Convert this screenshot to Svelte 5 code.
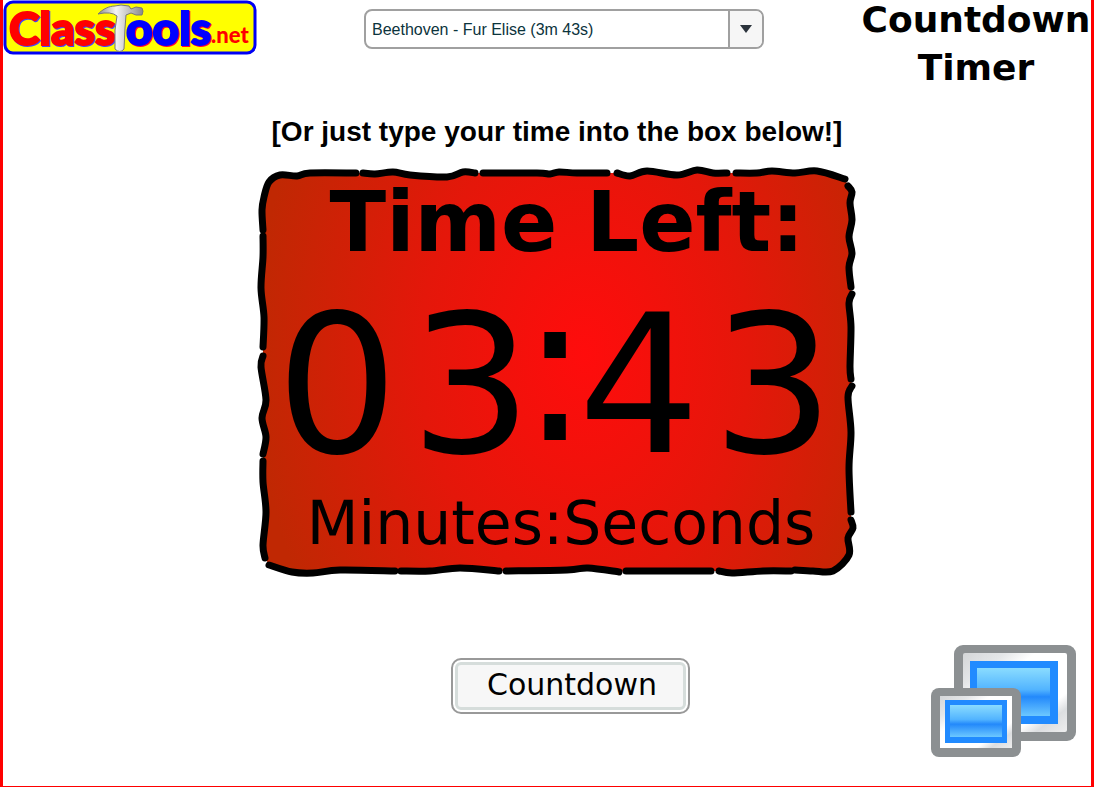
<script lang="ts">
	type Point = [number, number];

	const tracks = ['Beethoven - Fur Elise (3m 43s)'];

	let track = $state(tracks[0]);
	let minutes = $state(['0', '3']);
	let seconds = $state(['4', '3']);
	let timer: ReturnType<typeof setInterval> | undefined;

	// brush strokes round the card, clockwise from the left side
	const strokes: Point[][] = [
		[[3, 61], [2, 41], [4, 28], [9, 13], [20, 6], [37, 7], [50, 4], [96, 4]],
		[[103, 4], [115, 5], [133, 3], [150, 6], [187, 8], [203, 3], [215, 4]],
		[[223, 4], [277, 4], [290, 5], [299, 3], [317, 4], [347, 4]],
		[[357, 4], [370, 7], [387, 2], [417, 6], [437, 1], [453, 4], [467, 4]],
		[[476, 4], [497, 4], [512, 2], [535, 4], [557, 2], [585, 10]],
		[[588, 17], [592, 23], [590, 34], [592, 51], [589, 68], [592, 84], [589, 98], [591, 118]],
		[[592, 125], [589, 134], [591, 158], [590, 198], [591, 210]],
		[[592, 217], [588, 228], [591, 263], [589, 299], [591, 343]],
		[[591, 351], [593, 359], [588, 369], [589, 386], [573, 402], [553, 402], [535, 401]],
		[[531, 402], [503, 402], [472, 404], [459, 402]],
		[[451, 402], [366, 402]],
		[[359, 403], [328, 399], [307, 401], [246, 402]],
		[[239, 402], [200, 399], [170, 402], [141, 402]],
		[[135, 402], [80, 401], [53, 404], [32, 403], [9, 396]],
		[[5, 389], [3, 376], [6, 343], [3, 313], [3, 292]],
		[[3, 285], [6, 268], [2, 249], [6, 231], [1, 198], [3, 187]],
		[[3, 178], [4, 148], [1, 119], [3, 88], [3, 67]]
	];

	const outline = strokes.flat().join(' ');

	function smooth(points: Point[]) {
		let d = `M${points[0]}`;
		for (let i = 0; i < points.length - 1; i++) {
			const a = points[Math.max(i - 1, 0)];
			const b = points[i];
			const c = points[i + 1];
			const e = points[Math.min(i + 2, points.length - 1)];
			d += `C${b[0] + (c[0] - a[0]) / 6},${b[1] + (c[1] - a[1]) / 6}`;
			d += ` ${c[0] - (e[0] - b[0]) / 6},${c[1] - (e[1] - b[1]) / 6} ${c}`;
		}
		return d;
	}

	function tick() {
		const left = Number(minutes.join('')) * 60 + Number(seconds.join('')) - 1;
		if (left < 0) {
			clearInterval(timer);
			return;
		}
		minutes = String(Math.floor(left / 60)).padStart(2, '0').split('');
		seconds = String(left % 60).padStart(2, '0').split('');
	}

	function start() {
		clearInterval(timer);
		timer = setInterval(tick, 1000);
	}

	function fullscreen() {
		document.documentElement.requestFullscreen();
	}
</script>

<div class="page">
	<header>
		<a class="logo" href="/" aria-label="ClassTools.net">
			<svg viewBox="0 0 254 55" width="254" height="55">
				<defs>
					<linearGradient id="steel" x1="0" x2="1">
						<stop offset="0" stop-color="#8f8f8f" />
						<stop offset="0.4" stop-color="#f4f4f4" />
						<stop offset="1" stop-color="#8a8a8a" />
					</linearGradient>
				</defs>
				<rect x="2" y="2" width="250" height="51" rx="8" fill="#ff0" stroke="#0000f5" stroke-width="3" />
				<text class="red" x="6" y="45">Class</text>
				<text class="blue" x="123" y="45">ools</text>
				<text class="net" x="208" y="43">.net</text>
				<path
					d="M95 14C100 9 106 6 112 6L118 5L126 6L128 9L133 7L139 8Q141 11 139 15L133 15L128 13L123 15L122 28L121 49Q117 54 112 49L112 30L114 16Q108 11 95 14Z"
					fill="url(#steel)"
					stroke="#777"
				/>
			</svg>
		</a>
		<div class="picker">
			<select aria-label="Music" bind:value={track}>
				{#each tracks as name}
					<option>{name}</option>
				{/each}
			</select>
			<span class="arrow">
				<svg viewBox="0 0 12 8" width="12" height="8"><path d="M0 0H12L6 8Z" fill="#2b333c" /></svg>
			</span>
		</div>
		<h1>Countdown Timer</h1>
	</header>

	<main>
		<p class="hint">[Or just type your time into the box below!]</p>

		<section class="card">
			<svg class="frame" viewBox="0 0 594 406" preserveAspectRatio="none">
				<defs>
					<radialGradient
						id="glow"
						gradientUnits="userSpaceOnUse"
						cx="0"
						cy="0"
						r="330"
						gradientTransform="translate(325 185) scale(1 1.4)"
					>
						<stop offset="0" stop-color="#ff0c0c" />
						<stop offset="0.5" stop-color="#e4170a" />
						<stop offset="1" stop-color="#c02803" />
					</radialGradient>
				</defs>
				<polygon points={outline} fill="url(#glow)" />
				{#each strokes as stroke}
					<path class="brush" d={smooth(stroke)} />
				{/each}
			</svg>
			<h2>Time Left:</h2>
			<div class="time">
				<div class="pair">
					<input aria-label="Minutes, tens" maxlength="1" bind:value={minutes[0]} />
					<input aria-label="Minutes, ones" maxlength="1" bind:value={minutes[1]} />
				</div>
				<span class="colon">:</span>
				<div class="pair">
					<input aria-label="Seconds, tens" maxlength="1" bind:value={seconds[0]} />
					<input aria-label="Seconds, ones" maxlength="1" bind:value={seconds[1]} />
				</div>
			</div>
			<p class="units">Minutes:Seconds</p>
		</section>
	</main>

	<footer>
		<button class="start" onclick={start}>Countdown</button>
		<button class="screens" aria-label="Full screen" onclick={fullscreen}>
			<svg viewBox="0 0 145 112" width="145" height="112">
				<defs>
					<linearGradient id="glass" x2="0" y2="1">
						<stop offset="0" stop-color="#8adcff" />
						<stop offset="0.45" stop-color="#52b4ff" />
						<stop offset="0.6" stop-color="#2389fb" />
						<stop offset="1" stop-color="#6cc8ff" />
					</linearGradient>
					<linearGradient id="bezel" x2="1" y2="1">
						<stop offset="0" stop-color="#d4d6d8" />
						<stop offset="0.2" stop-color="#e4e6e8" />
						<stop offset="0.35" stop-color="#fff" />
						<stop offset="0.75" stop-color="#fff" />
						<stop offset="0.85" stop-color="#dcdee0" />
						<stop offset="1" stop-color="#eee" />
					</linearGradient>
				</defs>
				<rect x="23" y="0" width="122" height="96" rx="9" fill="#8c9092" />
				<rect x="32" y="8" width="104" height="79" rx="2" fill="url(#bezel)" />
				<rect x="39" y="16" width="88" height="63" fill="#218bff" />
				<rect x="46" y="23" width="73" height="48" fill="url(#glass)" />
				<rect x="0" y="43" width="90" height="69" rx="8" fill="#8c9092" />
				<rect x="9" y="51" width="72" height="52" fill="url(#bezel)" />
				<rect x="14" y="55" width="62" height="43" fill="#218bff" />
				<rect x="19" y="60" width="52" height="32" fill="url(#glass)" />
			</svg>
		</button>
	</footer>
</div>

<style>
	:global(body) {
		background: #fff;
	}
	.page {
		box-sizing: border-box;
		min-height: 100vh;
		border: solid #f00;
		border-width: 0 3px 1px;
		font-family: 'DejaVu Sans', Verdana, sans-serif;
		color: #000;
	}
	header {
		display: flex;
		justify-content: space-between;
		align-items: flex-start;
		height: 92px;
	}
	.logo svg {
		display: block;
	}
	.logo text {
		font-family: Lato, sans-serif;
		font-weight: 900;
		font-size: 46px;
		stroke-width: 2px;
	}
	.logo .red {
		fill: #f00;
		stroke: #f00;
		filter: drop-shadow(1px 1px 0 #44f);
	}
	.logo .blue {
		fill: #00f;
		stroke: #00f;
		filter: drop-shadow(1px 1px 0 #f03);
	}
	.logo .net {
		font-size: 22px;
		fill: #f00;
	}
	.picker {
		position: relative;
		width: 400px;
		margin: 9px 0 0 10px;
	}
	select {
		appearance: none;
		display: block;
		box-sizing: border-box;
		width: 100%;
		height: 40px;
		padding: 0 40px 0 6px;
		border: 2px solid #a0a0a0;
		border-radius: 8px;
		background: #fff;
		font: 16px 'Liberation Sans', Arial, sans-serif;
		color: #0b333c;
	}
	.arrow {
		position: absolute;
		top: 2px;
		right: 2px;
		bottom: 2px;
		display: flex;
		align-items: center;
		justify-content: center;
		width: 32px;
		border-left: 2px solid #a0a0a0;
		border-radius: 0 6px 6px 0;
		background: #f6f6f6;
		pointer-events: none;
	}
	h1 {
		width: 230px;
		margin: -4px 0 0;
		font-size: 36px;
		line-height: 48px;
		text-align: center;
	}
	main {
		display: flex;
		flex-direction: column;
		align-items: center;
		padding-left: 20px;
	}
	.hint {
		margin: 24px 0 21px;
		font: bold 28px/32px 'Liberation Sans', Arial, sans-serif;
	}
	.card {
		position: relative;
		box-sizing: border-box;
		width: 594px;
		padding: 5px 8px 27px;
		text-align: center;
	}
	.frame {
		position: absolute;
		inset: 0;
		width: 100%;
		height: 100%;
		overflow: visible;
		z-index: -1;
	}
	.brush {
		fill: none;
		stroke: #000;
		stroke-width: 7px;
		stroke-linecap: round;
		stroke-linejoin: round;
	}
	h2 {
		margin: 0 0 0 20px;
		font-size: 83px;
		line-height: 98px;
	}
	.time {
		display: flex;
		justify-content: center;
		align-items: center;
		gap: 6px;
		height: 226px;
		margin-right: 4px;
	}
	.pair {
		display: flex;
		gap: 2px;
	}
	input {
		width: 132px;
		height: 220px;
		padding: 0;
		border: 0;
		background: none;
		font: 192px 'DejaVu Sans', Verdana, sans-serif;
		color: #000;
		text-align: center;
		outline: none;
	}
	.colon {
		display: flex;
		justify-content: center;
		width: 24px;
		padding-bottom: 34px;
		font-size: 208px;
		line-height: 220px;
	}
	.units {
		margin: 0 0 0 8px;
		font-size: 60px;
		line-height: 50px;
	}
	footer {
		display: grid;
		grid-template-columns: 1fr auto 1fr;
		align-items: start;
		padding: 70px 15px 28px 61px;
	}
	button {
		padding: 0;
		border: 0;
		background: none;
		cursor: pointer;
	}
	.start {
		grid-column: 2;
		box-sizing: border-box;
		width: 239px;
		height: 56px;
		margin-top: 13px;
		padding: 0 0 4px 4px;
		border: 2px solid #999;
		border-radius: 10px;
		background: #f7f7f7;
		box-shadow:
			inset 0 0 0 2px #fff,
			inset 0 0 0 5px #d6dddb;
		font: 30px 'DejaVu Sans', Verdana, sans-serif;
		color: #000;
	}
	.screens {
		justify-self: end;
	}
	.screens svg {
		display: block;
	}
</style>
